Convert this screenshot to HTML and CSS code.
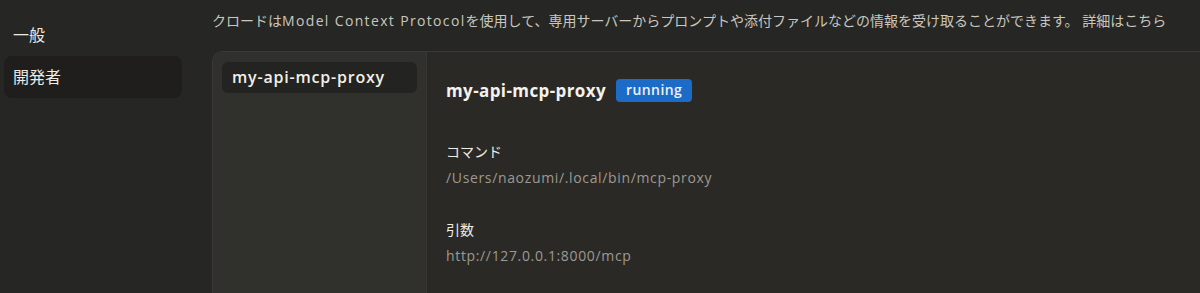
FILE: index.html
```html
<!DOCTYPE html>
<html lang="ja">
<head>
    <meta charset="UTF-8">
    <title>設定 - 開発者</title>
    <link rel="stylesheet" href="styles.css">
</head>
<body>
<div class="layout">
    <!-- 左のメニュー -->
    <nav class="sidebar">
        <div class="nav-item">一般</div>
        <div class="nav-item active">開発者</div>
    </nav>

    <main class="content">
        <p class="intro">クロードは<span class="latin">Model Context Protocol</span>を使用して、専用サーバーからプロンプトや添付ファイルなどの情報を受け取ることができます。 <span class="link">詳細はこちら</span></p>

        <div class="panel">
            <div class="server-list">
                <div class="server-item">my-api-mcp-proxy</div>
            </div>

            <div class="server-detail">
                <div class="detail-head">
                    <h2>my-api-mcp-proxy</h2>
                    <span class="badge">running</span>
                </div>

                <div class="field">
                    <div class="field-label">コマンド</div>
                    <div class="field-value">/Users/naozumi/.local/bin/mcp-proxy</div>
                </div>

                <div class="field">
                    <div class="field-label">引数</div>
                    <div class="field-value">http://127.0.0.1:8000/mcp</div>
                </div>
            </div>
        </div>
    </main>
</div>
</body>
</html>
```

FILE: styles.css
```css
body {
    margin: 0;
    font-family: "Open Sans", "Noto Sans CJK JP", sans-serif;
    background-color: #262624;
    color: #e8e6dd;
    overflow: hidden;
}

.layout {
    display: flex;
    height: 293px;
    overflow: hidden;
}

/* 左メニュー */
.sidebar {
    width: 178px;
    padding: 14px 0 0 4px;
    flex-shrink: 0;
}

.nav-item {
    height: 42px;
    line-height: 42px;
    padding-left: 9px;
    font-size: 16px;
    border-radius: 8px;
    color: #ecebe4;
}

.nav-item.active {
    background-color: #1f1e1d;
}

.content {
    flex: 1;
    margin-left: 30px;
    min-width: 0;
}

.intro {
    margin: 0;
    height: 51px;
    line-height: 42px;
    font-size: 14px;
    color: #c9c7bf;
    white-space: nowrap;
}

.intro .latin {
    letter-spacing: 1.35px;
}

.link {
    color: #c9c7bf;
}

/* サーバーパネル */
.panel {
    display: flex;
    height: 242px;
    margin-right: -20px;
    border: 1px solid #3a3936;
    border-right: none;
    border-bottom: none;
    border-radius: 10px 0 0 0;
    overflow: hidden;
}

.server-list {
    width: 214px;
    padding: 10px 9px;
    box-sizing: border-box;
    background-color: #30302d;
    border-right: 1px solid #373633;
}

.server-item {
    height: 31px;
    line-height: 30px;
    padding-left: 10px;
    border-radius: 6px;
    background-color: #232321;
    font-size: 16px;
    font-weight: 600;
    letter-spacing: 0.8px;
    color: #f2f0e9;
}

.server-detail {
    flex: 1;
    padding: 27px 19px 0;
    background-color: #2a2926;
}

.detail-head {
    display: flex;
    align-items: center;
    gap: 10px;
}

.detail-head h2 {
    margin: 0;
    font-size: 17px;
    font-weight: 700;
    letter-spacing: 0.4px;
    color: #f4f2ec;
}

.badge {
    height: 23px;
    line-height: 22px;
    padding: 0 10px;
    border-radius: 4px;
    background-color: #1c6bc7;
    color: #eaf2fc;
    font-size: 14px;
    font-weight: 600;
    letter-spacing: 0.4px;
}

.field {
    margin-top: 37px;
}

.field + .field {
    margin-top: 26px;
}

.field-label {
    font-size: 14px;
    line-height: 26px;
    color: #ecebe4;
}

.field-value {
    font-size: 14px;
    line-height: 26px;
    letter-spacing: 0.65px;
    color: #9c9a92;
}
```
